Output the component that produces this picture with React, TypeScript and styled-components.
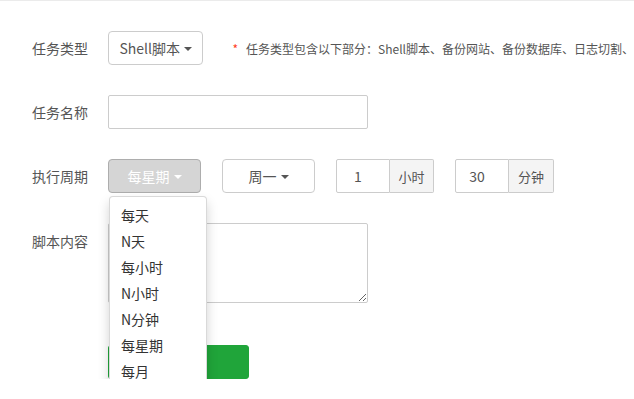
import styled, { createGlobalStyle } from 'styled-components';

const GlobalStyle = createGlobalStyle`
  html, body {
    margin: 0;
    padding: 0;
    background: #fff;
    overflow: hidden;
  }
  body {
    font-family: "Noto Sans CJK SC", "Noto Sans", "Liberation Sans", sans-serif;
    font-size: 14px;
    color: #555;
  }
  * {
    box-sizing: border-box;
  }
`;

const cycleOptions = ['每天', 'N天', '每小时', 'N小时', 'N分钟', '每星期', '每月'];

function App() {
  return (
    <>
      <GlobalStyle />
      <Page>
        <Row>
          <Label>任务类型</Label>
          <SelectButton $width={98}>
            Shell脚本 <Caret />
          </SelectButton>
          <Note>
            <Star>*</Star>
            任务类型包含以下部分：Shell脚本、备份网站、备份数据库、日志切割、
          </Note>
        </Row>

        <Row>
          <Label>任务名称</Label>
          <TextInput />
        </Row>

        <Row>
          <Label>执行周期</Label>
          <Controls>
            <DropdownWrap>
              <SelectButton $width={93} $active>
                每星期 <Caret />
              </SelectButton>
              <Menu>
                {cycleOptions.map((item) => (
                  <MenuItem key={item}>{item}</MenuItem>
                ))}
              </Menu>
            </DropdownWrap>
            <SelectButton $width={93}>
              周一 <Caret />
            </SelectButton>
            <InputGroup>
              <GroupInput defaultValue="1" />
              <Addon $width={44}>小时</Addon>
            </InputGroup>
            <InputGroup>
              <GroupInput defaultValue="30" />
              <Addon $width={45}>分钟</Addon>
            </InputGroup>
          </Controls>
        </Row>

        <Row $top>
          <Label $top>脚本内容</Label>
          <ScriptArea />
        </Row>

        <Row>
          <Label />
          <SubmitButton>添加任务</SubmitButton>
        </Row>
      </Page>
    </>
  );
}

const Page = styled.div`
  border-top: 1px solid #ebebeb;
  padding: 30px 0 0 32px;
  display: flex;
  flex-direction: column;
  gap: 30px;
`;

const Row = styled.div<{ $top?: boolean }>`
  display: flex;
  align-items: ${(p) => (p.$top ? 'flex-start' : 'center')};
  white-space: nowrap;
  &:last-child {
    margin-top: 12px;
  }
`;

const Label = styled.div<{ $top?: boolean }>`
  width: 76px;
  flex-shrink: 0;
  font-size: 14px;
  color: #555;
  line-height: 20px;
  padding-top: ${(p) => (p.$top ? '8px' : '0')};
`;

const Controls = styled.div`
  display: flex;
  align-items: center;
  gap: 21px;
`;

const DropdownWrap = styled.div`
  position: relative;
`;

const SelectButton = styled.button<{ $width: number; $active?: boolean }>`
  width: ${(p) => p.$width}px;
  height: 34px;
  display: flex;
  align-items: center;
  justify-content: center;
  gap: 4px;
  font-family: inherit;
  font-size: 14px;
  color: ${(p) => (p.$active ? '#fff' : '#555')};
  background: ${(p) => (p.$active ? '#d5d5d5' : '#fff')};
  border: 1px solid ${(p) => (p.$active ? '#adadad' : '#ccc')};
  border-radius: 4px;
  padding: 0 10px;
  cursor: pointer;
`;

const Caret = styled.span`
  display: inline-block;
  width: 0;
  height: 0;
  border-top: 4px solid currentColor;
  border-left: 4px solid transparent;
  border-right: 4px solid transparent;
  margin-top: 1px;
`;

const Note = styled.div`
  margin-left: 29px;
  font-size: 12px;
  color: #555;
  display: flex;
  align-items: center;
`;

const Star = styled.span`
  color: #ff3b1f;
  margin-right: 8px;
  font-size: 12px;
`;

const TextInput = styled.input`
  width: 260px;
  height: 34px;
  border: 1px solid #ccc;
  border-radius: 2px;
  padding: 0 12px;
  font-family: inherit;
  font-size: 14px;
  outline: none;
`;

const Menu = styled.ul`
  position: absolute;
  top: 100%;
  left: 1px;
  margin: 3px 0 0;
  padding: 5px 0;
  list-style: none;
  width: 98px;
  background: #fff;
  border: 1px solid rgba(0, 0, 0, 0.15);
  border-radius: 4px;
  box-shadow: 0 6px 12px rgba(0, 0, 0, 0.175);
  z-index: 10;
`;

const MenuItem = styled.li`
  height: 26px;
  line-height: 26px;
  padding: 0 11px;
  font-size: 14px;
  color: #333;
`;

const InputGroup = styled.div`
  display: flex;
  height: 34px;
`;

const GroupInput = styled.input`
  width: 54px;
  height: 34px;
  border: 1px solid #ccc;
  border-radius: 2px 0 0 2px;
  padding: 0 10px 0 0;
  text-align: center;
  font-family: inherit;
  font-size: 14px;
  color: #555;
  outline: none;
`;

const Addon = styled.span<{ $width: number }>`
  width: ${(p) => p.$width}px;
  height: 34px;
  display: flex;
  align-items: center;
  justify-content: center;
  font-size: 13px;
  color: #555;
  background: #f4f4f4;
  border: 1px solid #ccc;
  border-left: none;
  border-radius: 0 2px 2px 0;
`;

const ScriptArea = styled.textarea`
  width: 260px;
  height: 80px;
  border: 1px solid #ccc;
  border-radius: 2px;
  padding: 6px 10px;
  font-family: inherit;
  font-size: 14px;
  resize: both;
  outline: none;
`;

const SubmitButton = styled.button`
  width: 141px;
  height: 34px;
  background: #20a53a;
  color: #fff;
  border: 1px solid #20a53a;
  border-radius: 3px;
  font-family: inherit;
  font-size: 14px;
`;

export default App;
